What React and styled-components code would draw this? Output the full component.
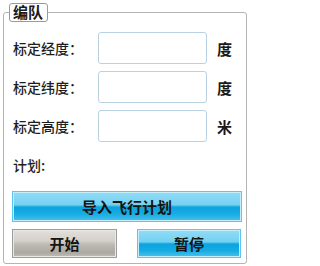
import React from 'react';
import styled, { createGlobalStyle } from 'styled-components';

const GlobalStyle = createGlobalStyle`
  html, body {
    margin: 0;
    padding: 0;
    background: #ffffff;
  }
  body {
    font-family: "Noto Sans CJK SC", "Noto Sans", sans-serif;
    color: #222;
  }
`;

const Group = styled.fieldset`
  box-sizing: border-box;
  width: 244px;
  height: 261px;
  margin: 3px 0 0 3px;
  padding: 0;
  border: 1px solid #b4b4b4;
  border-radius: 3px;
`;

const Legend = styled.legend`
  box-sizing: border-box;
  height: 19px;
  margin-left: 5px;
  padding: 0 4px 0 3px;
  border: 1px solid #9a9a9a;
  border-radius: 3px;
  font-size: 15px;
  line-height: 16px;
  font-weight: 600;
  color: #1a1a1a;
`;

const Body = styled.div`
  padding: 10px 3px 0 8px;
`;

const Fields = styled.div`
  display: grid;
  grid-template-columns: 86px 109px auto;
  grid-auto-rows: 32px;
  row-gap: 7px;
  align-items: center;
`;

const Label = styled.span`
  padding-left: 1px;
  font-size: 14px;
  font-weight: 500;
  color: #1e1e1e;
  white-space: nowrap;
`;

const Input = styled.input`
  box-sizing: border-box;
  width: 109px;
  height: 32px;
  margin: 0;
  border: 1px solid #b8d2e4;
  border-radius: 3px;
  background: #fff;
  outline: none;
`;

const Unit = styled.span`
  padding-left: 10px;
  font-size: 15px;
  font-weight: 600;
  color: #1a1a1a;
`;

const PlanLabel = styled.div`
  margin-top: 13px;
  padding-left: 1px;
  height: 20px;
  line-height: 20px;
  font-size: 14px;
  font-weight: 500;
  color: #1e1e1e;
`;

const Button = styled.button`
  box-sizing: border-box;
  display: flex;
  align-items: center;
  justify-content: center;
  width: ${p => p.$width}px;
  height: ${p => p.$height}px;
  margin: 0;
  padding: 0;
  font-family: "Noto Sans CJK SC", sans-serif;
  font-size: 15px;
  font-weight: 700;
  color: #141414;
  cursor: pointer;
  border: 1px solid ${p => (p.$gray ? '#9c9c9c' : '#5cc6ee')};
  box-shadow: inset 0 0 0 1px ${p => (p.$gray ? '#ebe8e4' : '#c6eefb')};
  background: ${p =>
    p.$gray
      ? 'linear-gradient(to bottom, #e3e0db 0%, #d4d0cb 40%, #bcb8b2 55%, #aca8a2 85%, #c2beb9 100%)'
      : 'linear-gradient(to bottom, #92dcf6 0%, #74d1f2 44%, #0aa4df 52%, #17abe2 75%, #48c2ee 100%)'};
`;

const ImportRow = styled.div`
  margin-top: 16px;
`;

const ActionRow = styled.div`
  display: flex;
  gap: 20px;
  margin-top: 7px;
`;

const fields = [
  { label: '标定经度：', unit: '度' },
  { label: '标定纬度：', unit: '度' },
  { label: '标定高度：', unit: '米' },
];

export default function App() {
  return (
    <>
      <GlobalStyle />
      <Group>
        <Legend>编队</Legend>
        <Body>
          <Fields>
            {fields.map(f => (
              <React.Fragment key={f.label}>
                <Label>{f.label}</Label>
                <Input type="text" />
                <Unit>{f.unit}</Unit>
              </React.Fragment>
            ))}
          </Fields>
          <PlanLabel>计划:</PlanLabel>
          <ImportRow>
            <Button $width={230} $height={31}>导入飞行计划</Button>
          </ImportRow>
          <ActionRow>
            <Button $gray $width={105} $height={29}>开始</Button>
            <Button $width={104} $height={29}>暂停</Button>
          </ActionRow>
        </Body>
      </Group>
    </>
  );
}
